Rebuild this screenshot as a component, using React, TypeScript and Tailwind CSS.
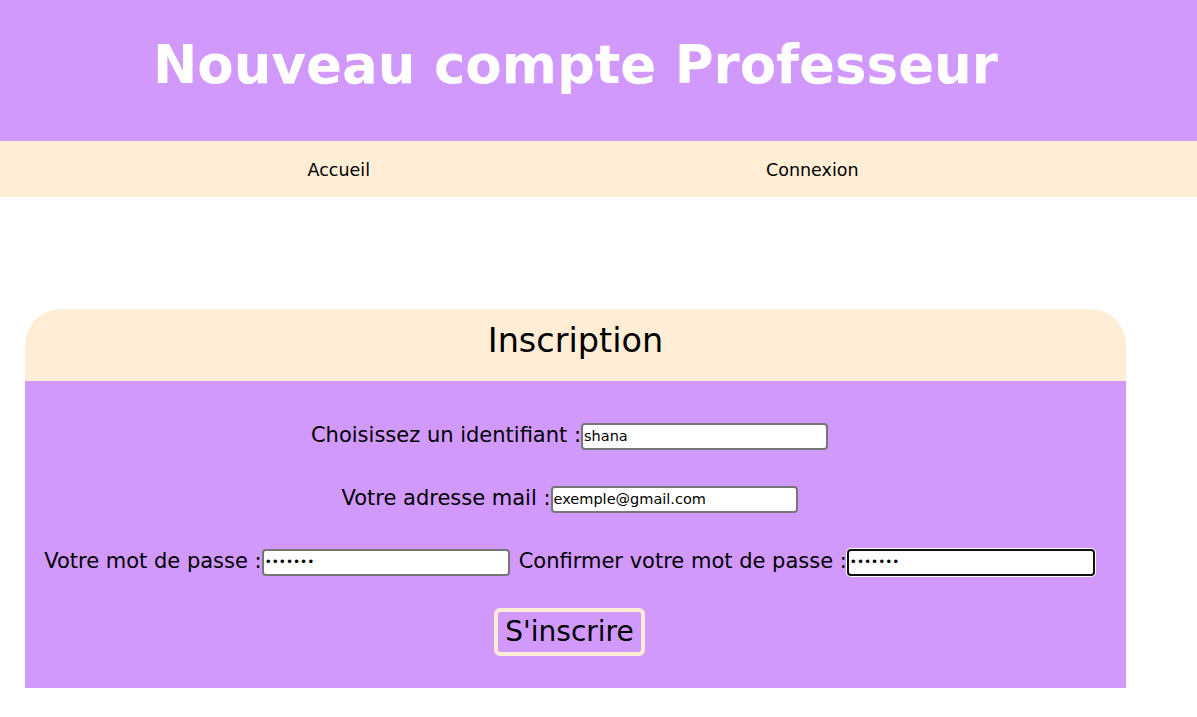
import React from "react";

const font = { fontFamily: '"Comic Sans MS", "DejaVu Sans", sans-serif' };

export default function App() {
  return (
    <div className="min-h-[717px] bg-white text-black" style={font}>
      <header className="h-[141px] bg-[#d299fd] flex items-center">
        <h1 className="w-[1151px] text-center text-white font-bold text-[53px] leading-none pb-3">
          Nouveau compte Professeur
        </h1>
      </header>
      <nav className="h-[56px] bg-[#ffeed5] flex items-center">
        <div className="w-[1151px] flex px-[102px]">
          <a className="flex-1 text-center text-[17.5px] pt-[2px]">Accueil</a>
          <a className="flex-1 text-center text-[17.5px] pt-[2px]">Connexion</a>
        </div>
      </nav>
      <div className="pt-[112px] pl-[25px]">
        <div className="w-[1101px]">
          <div className="h-[72px] bg-[#ffeed5] rounded-t-[36px] flex items-center justify-center">
            <h2 className="text-[33.5px] leading-none pb-[8px]">Inscription</h2>
          </div>
          <form className="h-[307px] bg-[#d299fd] flex flex-col items-center pt-[41px] pr-[12px]">
            <div className="flex items-center h-[28px] text-[21px]">
              <label>Choisissez un identifiant :</label>
              <input
                className="w-[247px] h-[27px] bg-white border-2 border-[#767676] rounded-[4px] px-[1px] text-[14.5px] outline-none"
                defaultValue="shana"
              />
            </div>
            <div className="flex items-center h-[28px] mt-[35px] text-[21px]">
              <label>Votre adresse mail :</label>
              <input
                className="w-[247px] h-[27px] bg-white border-2 border-[#767676] rounded-[4px] px-[1px] text-[14.5px] outline-none"
                defaultValue="exemple@gmail.com"
              />
            </div>
            <div className="flex items-center h-[28px] mt-[35px] text-[21px]">
              <label>Votre mot de passe :</label>
              <input
                type="password"
                className="w-[248px] h-[27px] bg-white border-2 border-[#767676] rounded-[4px] px-[1px] text-[12px] outline-none"
                defaultValue="1234567"
              />
              <label className="ml-[9px]">Confirmer votre mot de passe :</label>
              <input
                type="password"
                className="w-[248px] h-[27px] bg-white border-2 border-[#111111] rounded-[4px] px-[1px] text-[12px] outline-none ring-1 ring-white"
                defaultValue="1234567"
              />
            </div>
            <button
              type="button"
              className="mt-[32px] w-[151px] h-[48px] border-[4px] border-[#ffeed5] rounded-[6px] text-[28px] leading-none bg-[#d299fd] flex items-center justify-center"
            >
              S'inscrire
            </button>
          </form>
        </div>
      </div>
    </div>
  );
}
